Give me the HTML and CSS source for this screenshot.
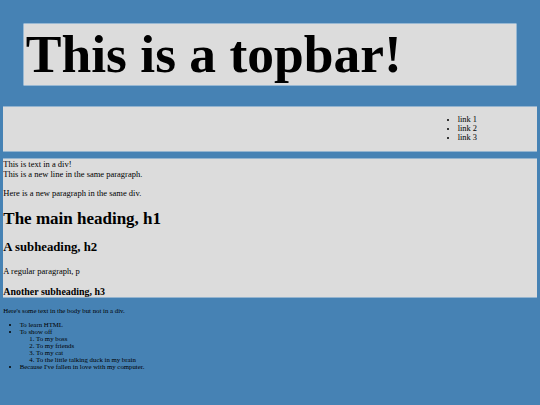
FILE: index.html
```html
<!DOCTYPE html>
<html>
<head>
<meta charset="utf-8">
<title>Topbar page</title>
<link rel="stylesheet" href="styles.css">
</head>
<body>
<div class="topbar">
  <h1 class="topbar-title">This is a topbar!</h1>
</div>
<div class="nav">
  <ul class="nav-links">
    <li>link 1</li>
    <li>link 2</li>
    <li>link 3</li>
  </ul>
</div>
<div class="main">
  <p>This is text in a div!<br>This is a new line in the same paragraph.</p>
  <p>Here is a new paragraph in the same div.</p>
  <h1>The main heading, h1</h1>
  <h2>A subheading, h2</h2>
  <p>A regular paragraph, p</p>
  <h3>Another subheading, h3</h3>
</div>
Here's some text in the body but not in a div.
<ul class="reasons">
  <li>To learn HTML</li>
  <li>To show off
    <ol class="audience">
      <li>To my boss</li>
      <li>To my friends</li>
      <li>To my cat</li>
      <li>To the little talking duck in my brain</li>
    </ol>
  </li>
  <li>Because I've fallen in love with my computer.</li>
</ul>
</body>
</html>
```
FILE: styles.css
```css
html, body {
  background: #4682b4;
}
body {
  margin: 3.3px;
  font-family: "Liberation Serif", "Times New Roman", serif;
  font-size: 6.8px;
  color: #000;
}
.topbar {
  margin: 20.5px 20.5px 22px;
  background: #dcdcdc;
  box-shadow: 0 0 0 0.5px #e9edf1;
}
.topbar-title {
  margin: 0;
  font-size: 53.5px;
  line-height: 61px;
  font-weight: bold;
  padding-left: 2px;
}
.nav {
  display: flow-root;
  background: #dcdcdc;
  font-size: 8.4px;
  box-shadow: 0 0 0 0.5px #e2e6ea;
}
.nav-links {
  margin: 8.4px 0 8.4px 438px;
  padding-left: 16.4px;
}
.main {
  background: #dcdcdc;
  font-size: 8.5px;
  box-shadow: 0 0 0 0.5px #e2e6ea;
}
.main p {
  margin: 1em 0;
}
.reasons {
  margin: 7px 0;
  padding-left: 16.4px;
}
.audience {
  margin: 0;
  padding-left: 16.4px;
}
```
